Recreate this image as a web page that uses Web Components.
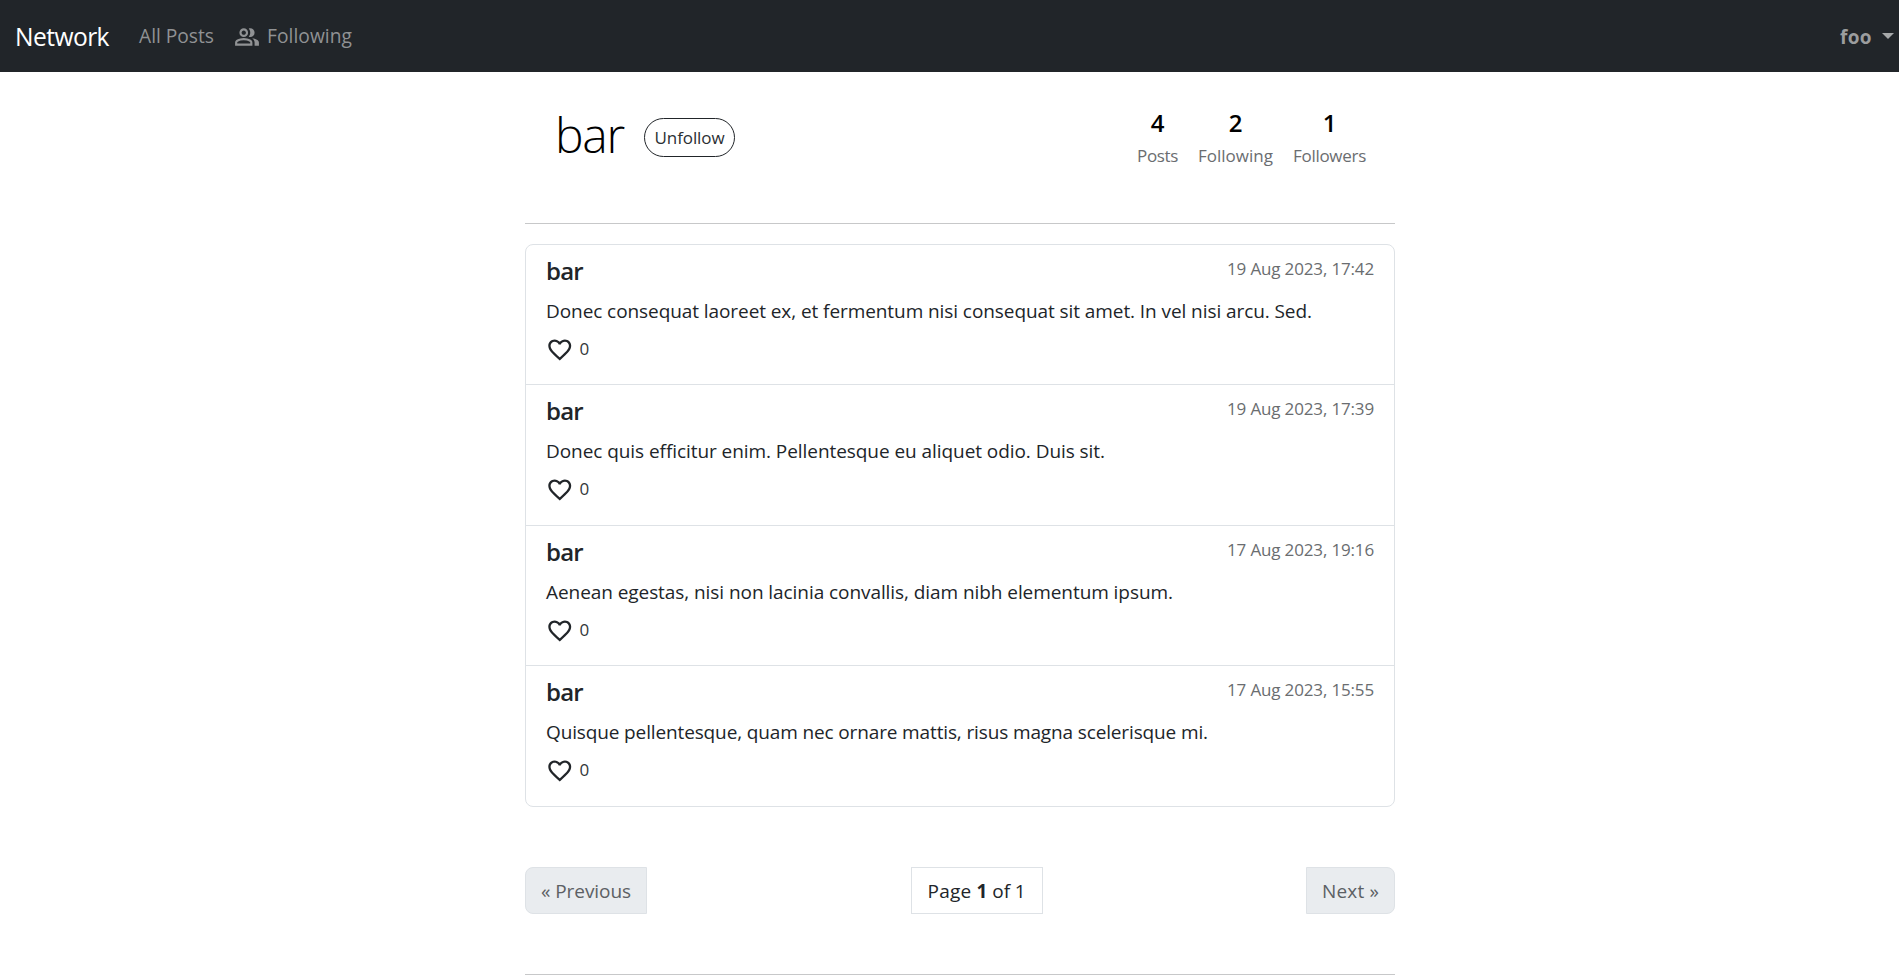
<!DOCTYPE html>
<html lang="en">
<head>
<meta charset="utf-8">
<title>Network</title>
<style>
html,body{margin:0;padding:0;background:#fff;height:975px;overflow:hidden}
body{font-family:"Open Sans","Noto Sans",sans-serif;font-size:19px;color:#212529}
</style>
</head>
<body>
<network-app></network-app>
<script>
function define(name, html, after) {
  const tpl = document.createElement('template');
  tpl.innerHTML = html;
  customElements.define(name, class extends HTMLElement {
    connectedCallback() {
      if (this.shadowRoot) return;
      this.attachShadow({mode: 'open'}).append(tpl.content.cloneNode(true));
      if (after) after(this, this.shadowRoot);
    }
  });
}

/* Text run with a set advance width: tracking is spread over its letters. */
define('text-run', `<style>
  :host{display:inline-block;white-space:pre;flex:none}
  span{display:inline-block;white-space:pre}
</style><span><slot></slot></span>`, (el, root) => {
  const w = parseFloat(el.getAttribute('w'));
  const span = root.querySelector('span');
  span.style.letterSpacing = '0.001px';
  const natural = span.getBoundingClientRect().width;
  span.style.letterSpacing = ((w - natural) / el.textContent.length) + 'px';
  el.style.width = w + 'px';
});

define('nav-bar', `<style>
  :host{display:flex;height:72px;background:#212529;box-sizing:border-box;padding:0 5px 0 15px;color:#909294;line-height:30px;align-items:flex-start}
  .brand{color:#fff;font-size:24.6px;line-height:38px;margin:18px 30px 0 0}
  .link{display:flex;margin-top:21px;font-size:19.2px}
  .following{margin-left:20px}
  .link svg{width:26px;height:26px;margin:3px 7px 0 0;fill:#909294}
  .user{margin-left:auto;display:flex;font-weight:700;margin-top:22px;color:#9b9d9e}
  i{width:0;height:0;border:6px solid transparent;border-top-color:#a6a8a9;border-bottom:0;margin:11px 0 0 10px}
</style>
<text-run class="brand" w="94">Network</text-run>
<span class="link"><text-run w="75">All Posts</text-run></span>
<span class="link following"><svg viewBox="0 -960 960 960"><path d="M40-160v-112q0-34 17.5-62.5T104-378q62-31 126-46.5T360-440q66 0 130 15.5T616-378q29 15 46.5 43.5T680-272v112H40Zm720 0v-120q0-44-24.5-84.5T666-434q51 6 96 20.5t84 35.5q36 20 55 44.5t19 53.5v120H760ZM360-480q-66 0-113-47t-47-113q0-66 47-113t113-47q66 0 113 47t47 113q0 66-47 113t-113 47Zm400-160q0 66-47 113t-113 47q-11 0-28-2.5t-28-5.5q27-32 41.5-71t14.5-81q0-42-14.5-81T544-792q14-5 28-6.5t28-1.5q66 0 113 47t47 113ZM120-240h480v-32q0-11-5.5-20T580-306q-54-27-109-40.5T360-360q-56 0-111 13.5T140-306q-9 5-14.5 14t-5.5 20v32Zm240-320q33 0 56.5-23.5T440-640q0-33-23.5-56.5T360-720q-33 0-56.5 23.5T280-640q0 33 23.5 56.5T360-560Z"/></svg><text-run w="85">Following</text-run></span>
<span class="user"><text-run w="32">foo</text-run><i></i></span>`);

define('stat-item', `<style>
  :host{display:flex;flex-direction:column;align-items:center}
  b{font-weight:600;font-size:24px;line-height:30px;color:#000}
  div{font-size:17px;line-height:26px;margin-top:5px;color:#6a6d70;font-weight:400}
</style><b></b><div><slot></slot></div>`, (el, root) => {
  root.querySelector('b').textContent = el.getAttribute('value');
});

define('profile-header', `<style>
  :host{display:flex;height:151px;box-sizing:border-box;padding:0 29px 0 30px;border-bottom:1px solid #c7c8c9}
  .name{font-size:48px;font-weight:300;line-height:60px;margin-top:32px;color:#000}
  button{font:400 17px/26px "Open Sans","Noto Sans",sans-serif;color:#2b2f33;background:#fff;border:1px solid #212529;border-radius:20px;width:91px;height:39px;margin:45px 0 0 20px;padding:0;display:flex;justify-content:center;align-items:center}
  .stats{margin:35px 0 0 auto;display:flex;gap:20px}
</style>
<text-run class="name" w="69">bar</text-run>
<button><text-run w="70">Unfollow</text-run></button>
<div class="stats">
<stat-item value="4"><text-run w="41">Posts</text-run></stat-item>
<stat-item value="2"><text-run w="75">Following</text-run></stat-item>
<stat-item value="1"><text-run w="73">Followers</text-run></stat-item>
</div>`);

define('post-item', `<style>
  :host{display:block;height:140px;box-sizing:border-box;padding:11px 20px 0;border-bottom:1px solid #dee2e6}
  .top{display:flex;justify-content:space-between;line-height:30px;height:30px}
  .top b{font-weight:600;font-size:24px}
  .date{font-size:17px;line-height:26px;color:#6a6d70;font-weight:400}
  .text{line-height:30px;margin-top:10px;height:30px}
  .likes{display:flex;margin-top:10px;font-size:17px;line-height:26px;color:#33373a;font-weight:400}
  svg{width:27.5px;height:27.5px;fill:#212529;margin-right:6px}
</style>
<div class="top"><b><text-run w="37">bar</text-run></b><span class="date"><slot name="date"></slot></span></div>
<div class="text"><slot></slot></div>
<div class="likes"><svg viewBox="0 0 24 24"><path d="M16.5 3c-1.74 0-3.41.81-4.5 2.09C10.91 3.81 9.24 3 7.5 3 4.42 3 2 5.42 2 8.5c0 3.78 3.4 6.86 8.55 11.54L12 21.35l1.45-1.32C18.6 15.36 22 12.28 22 8.5 22 5.42 19.58 3 16.5 3zm-4.4 15.55l-.1.1-.1-.1C7.14 14.24 4 11.39 4 8.5 4 6.5 5.5 5 7.5 5c1.54 0 3.04.99 3.57 2.36h1.87C13.46 5.99 14.96 5 16.5 5c2 0 3.5 1.5 3.5 3.5 0 2.89-3.14 5.74-7.9 10.05z"/></svg><text-run w="10">0</text-run></div>`);

define('post-list', `<style>
  :host{display:block;margin-top:20px;border:1px solid #dee2e6;border-radius:8px}
  ::slotted(.tall){height:141px!important}
  ::slotted(:last-child){border-bottom-color:transparent!important}
</style><slot></slot>`);

define('page-box', `<style>
  :host{display:flex;justify-content:center;box-sizing:border-box;height:47px;border:1px solid #dee2e6;line-height:46px}
  :host([off]){background:#e9ecef;color:#5c6064}
  :host([side=left]){border-radius:8px 0 0 8px}
  :host([side=right]){border-radius:0 8px 8px 0}
</style><slot></slot>`);

define('page-nav', `<style>
  :host{display:flex;justify-content:space-between;margin-top:60px;padding-bottom:60px;border-bottom:1px solid #c7c8c9}
</style>
<page-box off side="left" style="width:122px"><text-run w="90">« Previous</text-run></page-box>
<page-box style="width:132px"><text-run w="49">Page </text-run><b><text-run w="11">1</text-run></b><text-run w="38"> of 1</text-run></page-box>
<page-box off side="right" style="width:89px"><text-run w="57">Next »</text-run></page-box>`);

define('network-app', `<style>
  :host{display:block}
  main{width:870px;margin:0 0 0 525px;padding-top:1px}
</style>
<nav-bar></nav-bar>
<main>
<profile-header></profile-header>
<post-list>
<post-item><text-run slot="date" w="147">19 Aug 2023, 17:42</text-run><text-run w="766">Donec consequat laoreet ex, et fermentum nisi consequat sit amet. In vel nisi arcu. Sed.</text-run></post-item>
<post-item class="tall"><text-run slot="date" w="147">19 Aug 2023, 17:39</text-run><text-run w="559">Donec quis efficitur enim. Pellentesque eu aliquet odio. Duis sit.</text-run></post-item>
<post-item><text-run slot="date" w="147">17 Aug 2023, 19:16</text-run><text-run w="627">Aenean egestas, nisi non lacinia convallis, diam nibh elementum ipsum.</text-run></post-item>
<post-item><text-run slot="date" w="147">17 Aug 2023, 15:55</text-run><text-run w="662">Quisque pellentesque, quam nec ornare mattis, risus magna scelerisque mi.</text-run></post-item>
</post-list>
<page-nav></page-nav>
</main>`);
</script>
</body>
</html>
